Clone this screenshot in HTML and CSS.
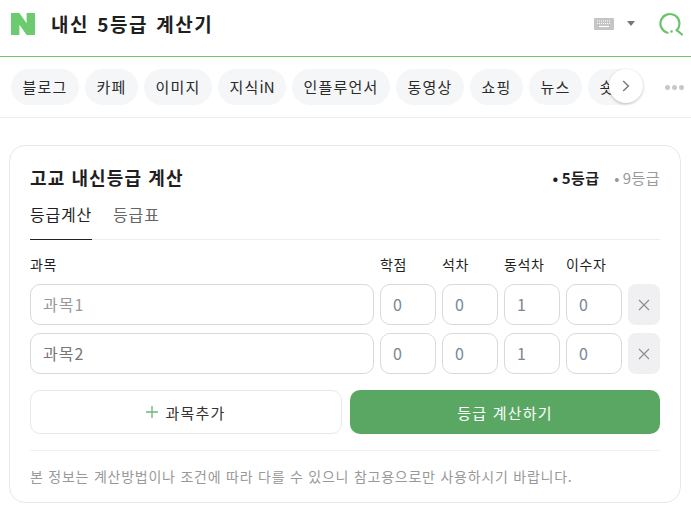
FILE: index.html
```html
<!DOCTYPE html>
<html lang="ko">
<head>
    <meta charset="UTF-8">
    <meta name="viewport" content="width=device-width, initial-scale=1.0">
    <title>내신 5등급 계산기</title>
    <link rel="stylesheet" href="styles.css">
</head>
<body>

<header class="top-bar">
    <svg class="logo" width="24" height="22" viewBox="0 0 24 22">
        <path d="M0 0H8.4L15.6 10.2V0H24V22H15.6L8.4 11.8V22H0Z" fill="#6bcb6e"/>
    </svg>
    <h1 class="query">내신 5등급 계산기</h1>
    <svg class="keyboard" width="20" height="12" viewBox="0 0 20 12">
        <rect width="20" height="12" rx="1" fill="#c4c4c4"/>
        <path d="M3 3H17M3 5.5H17" stroke="#fff" stroke-width="1.2" stroke-dasharray="1 1"/>
        <path d="M5 8.5H15" stroke="#fff" stroke-width="1.2"/>
    </svg>
    <span class="caret"></span>
    <svg class="search" width="24" height="24" viewBox="0 0 24 24" fill="none">
        <path d="M8.5 20.7A9.5 9.5 0 1 1 17.7 18.2" stroke="#6bc46d" stroke-width="2.2" stroke-linecap="round"/>
        <path d="M17.7 18.2L23 22.5" stroke="#6bc46d" stroke-width="2.2" stroke-linecap="round"/>
        <circle cx="12.5" cy="19.5" r="1.3" fill="#6bc46d"/>
    </svg>
</header>

<nav class="tabs-bar">
    <div class="chips">
        <a class="chip">블로그</a>
        <a class="chip">카페</a>
        <a class="chip">이미지</a>
        <a class="chip">지식<span class="latin">iN</span></a>
        <a class="chip">인플루언서</a>
        <a class="chip">동영상</a>
        <a class="chip">쇼핑</a>
        <a class="chip">뉴스</a>
        <a class="chip">숏폼</a>
    </div>
    <button class="next-btn" aria-label="다음">
        <svg width="8" height="12" viewBox="0 0 8 12" fill="none">
            <path d="M1.2 1L6.4 6L1.2 11" stroke="#777" stroke-width="1.4"/>
        </svg>
    </button>
    <div class="more"><i></i><i></i><i></i></div>
</nav>

<main class="card">
    <div class="card-head">
        <h2>고교 내신등급 계산</h2>
        <div class="scale">
            <span class="scale-item on">5등급</span>
            <span class="scale-item">9등급</span>
        </div>
    </div>
    <div class="sub-tabs">
        <a class="sub-tab active">등급계산</a>
        <a class="sub-tab">등급표</a>
    </div>
    <div class="grid-row labels">
        <span>과목</span>
        <span>학점</span>
        <span>석차</span>
        <span>동석차</span>
        <span>이수자</span>
        <span></span>
    </div>
    <div class="grid-row">
        <div class="field subject">과목1</div>
        <div class="field">0</div>
        <div class="field">0</div>
        <div class="field">1</div>
        <div class="field">0</div>
        <button class="remove" aria-label="삭제"><svg width="12" height="12" viewBox="0 0 12 12"><path d="M1 1L11 11M11 1L1 11" stroke="#8e8e93" stroke-width="1.2"/></svg></button>
    </div>
    <div class="grid-row">
        <div class="field subject dark">과목2</div>
        <div class="field">0</div>
        <div class="field">0</div>
        <div class="field">1</div>
        <div class="field">0</div>
        <button class="remove" aria-label="삭제"><svg width="12" height="12" viewBox="0 0 12 12"><path d="M1 1L11 11M11 1L1 11" stroke="#8e8e93" stroke-width="1.2"/></svg></button>
    </div>
    <div class="actions">
        <button class="add-btn"><svg class="plus" width="12" height="12" viewBox="0 0 12 12"><path d="M6 0V12M0 6H12" stroke="#6fb676" stroke-width="1.3"/></svg>과목추가</button>
        <button class="calc-btn">등급 계산하기</button>
    </div>
    <p class="note">본 정보는 계산방법이나 조건에 따라 다를 수 있으니 참고용으로만 사용하시기 바랍니다.</p>
</main>

</body>
</html>
```

FILE: styles.css
```css
* {
    box-sizing: border-box;
}
body {
    margin: 0;
    width: 691px;
    height: 508px;
    overflow: hidden;
    background-color: #fff;
    font-family: "Noto Sans CJK KR", "Noto Sans", sans-serif;
    color: #1f1f1f;
}
button {
    font-family: inherit;
}
.top-bar {
    display: flex;
    align-items: center;
    height: 57px;
    padding: 0 8px 9px 11px;
    border-bottom: 1px solid #6cc76c;
}
.logo {
    flex: none;
}
.query {
    flex: 1;
    margin: 0 0 0 16px;
    font-size: 19px;
    font-weight: 700;
    line-height: 24px;
    letter-spacing: 1.5px;
    word-spacing: 1.5px;
}
.keyboard {
    margin-right: 13px;
}
.caret {
    width: 0;
    height: 0;
    margin-right: 24px;
    border-style: solid;
    border-width: 5px 4.5px 0;
    border-color: #777 transparent transparent;
}
.tabs-bar {
    position: relative;
    display: flex;
    align-items: center;
    height: 61px;
    padding-left: 11px;
    border-bottom: 1px solid #eee;
}
.chips {
    display: flex;
    gap: 6px;
    width: 632px;
    overflow: hidden;
}
.chip {
    flex: none;
    padding: 0 11.5px;
    height: 36px;
    line-height: 35px;
    border-radius: 18px;
    background-color: #f5f6f8;
    font-size: 15px;
    letter-spacing: 1.2px;
    color: #2a2a2a;
}
.latin {
    letter-spacing: 0;
}
.next-btn {
    position: absolute;
    top: 12px;
    left: 609px;
    display: flex;
    align-items: center;
    justify-content: center;
    width: 34px;
    height: 34px;
    padding: 0;
    background-color: #fff;
    border: none;
    border-radius: 50%;
    box-shadow: 0 1px 3px rgba(0,0,0,0.25);
}
.more {
    display: flex;
    gap: 2px;
    margin-left: 22px;
}
.more i {
    width: 5px;
    height: 5px;
    border-radius: 50%;
    background-color: #c8c8c8;
}
.card {
    margin: 27px 10px 0 9px;
    height: 358px;
    padding: 16px 20px 0;
    border: 1px solid #e8e8e8;
    border-radius: 16px;
}
.card-head {
    display: flex;
    justify-content: space-between;
    align-items: center;
    height: 30px;
}
.card-head h2 {
    margin: 0;
    font-size: 18px;
    font-weight: 700;
    letter-spacing: 1.1px;
}
.scale {
    display: flex;
    gap: 15px;
}
.scale-item {
    font-size: 15px;
    letter-spacing: 0.4px;
    color: #999;
}
.scale-item::before {
    content: "•";
    margin-right: 3px;
}
.scale-item.on {
    font-weight: 700;
    color: #1f1f1f;
}
.sub-tabs {
    display: flex;
    gap: 21px;
    height: 48px;
    margin-top: 0;
    border-bottom: 1px solid #eee;
}
.sub-tab {
    height: 48px;
    padding-top: 11px;
    font-size: 16px;
    line-height: 22px;
    letter-spacing: 0.8px;
    color: #666;
}
.sub-tab.active {
    color: #1f1f1f;
    border-bottom: 1px solid #222;
}
.grid-row {
    display: grid;
    grid-template-columns: 344px 56px 56px 56px 56px 32px;
    gap: 6px;
    margin-bottom: 8px;
}
.labels {
    align-items: center;
    height: 28px;
    margin-top: 10px;
    margin-bottom: 6px;
    font-size: 14px;
    letter-spacing: 0.6px;
}
.field {
    height: 41px;
    padding-left: 12px;
    line-height: 38px;
    border: 1px solid #d9d9d9;
    border-radius: 10px;
    font-size: 16px;
    letter-spacing: 1px;
    color: #7b8794;
}
.subject {
    color: #999;
}
.subject.dark {
    color: #777;
}
.remove {
    display: flex;
    align-items: center;
    justify-content: center;
    height: 41px;
    padding: 0;
    background-color: #f0f0f2;
    border: none;
    border-radius: 8px;
}
.actions {
    display: flex;
    gap: 8px;
    margin-top: 16px;
}
.add-btn, .calc-btn {
    display: flex;
    align-items: center;
    justify-content: center;
    height: 44px;
    padding: 0;
    font-size: 15px;
    letter-spacing: 1.2px;
    border-radius: 10px;
}
.add-btn {
    width: 312px;
    background-color: #fff;
    border: 1px solid #e8e8e8;
    color: #333;
}
.plus {
    margin-right: 7px;
}
.calc-btn {
    width: 310px;
    background-color: #5aa764;
    border: none;
    color: #fff;
}
.note {
    margin: 16px 0 0;
    padding-top: 15px;
    border-top: 1px solid #f0f0f0;
    font-size: 14px;
    line-height: 20px;
    letter-spacing: 0.76px;
    color: #999;
}
```
